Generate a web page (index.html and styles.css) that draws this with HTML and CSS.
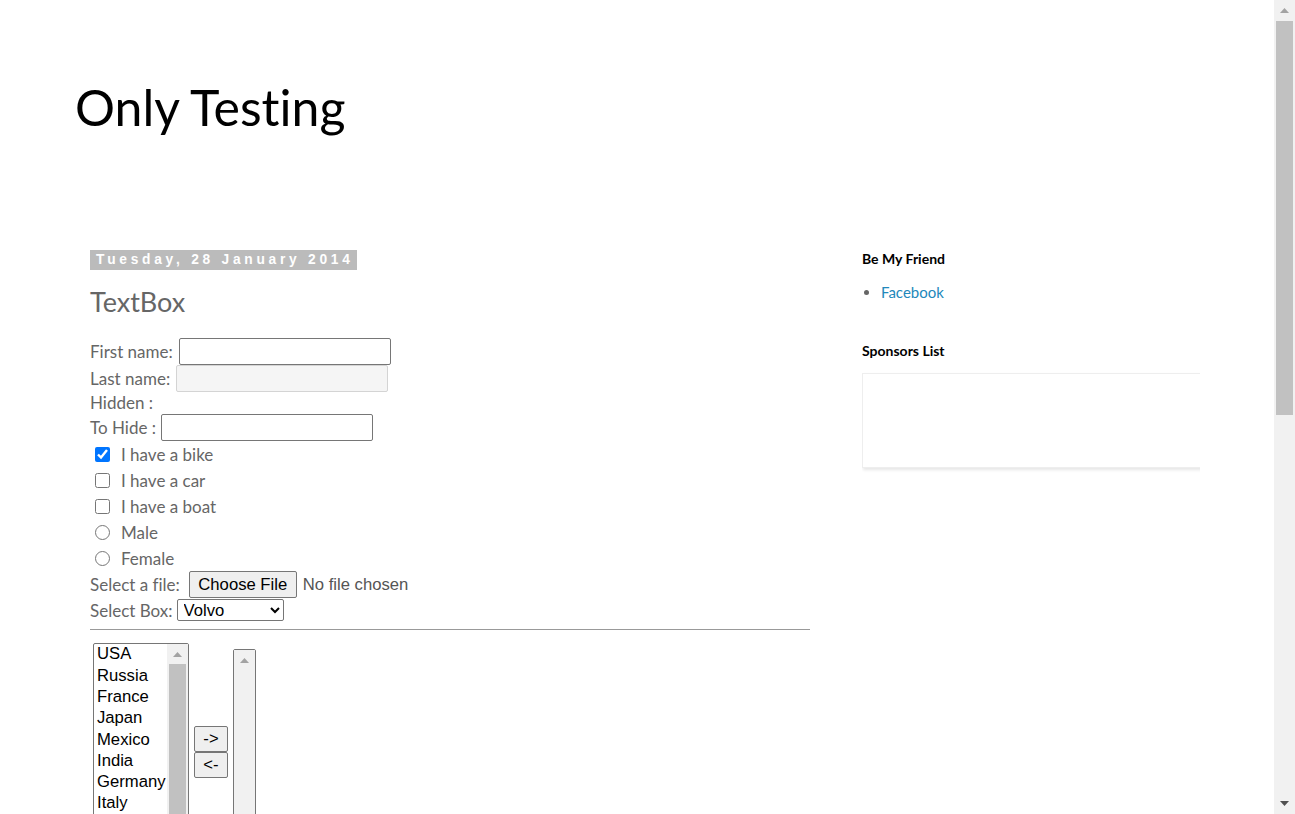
FILE: index.html
```html
<!DOCTYPE html>
<html>
<head>
<meta charset="utf-8">
<title>Only Testing</title>
<link rel="stylesheet" href="styles.css">
</head>
<body>
<div class="page">
  <header class="header">
    <h1 class="site-title">Only Testing</h1>
  </header>
  <div class="columns">
    <main class="main">
      <h2 class="date-header"><span>Tuesday, 28 January 2014</span></h2>
      <h3 class="post-title">TextBox</h3>
      <form class="post-body">
        <div class="row r-first">First name: <input class="text" type="text"></div>
        <div class="row r-last">Last name: <input class="text" type="text" disabled></div>
        <div class="row r-hidden">Hidden : <input type="hidden"></div>
        <div class="row r-hide">To Hide : <input class="text" type="text"></div>
        <div class="row r-check"><input class="cb" type="checkbox" checked> I have a bike</div>
        <div class="row r-check"><input class="cb" type="checkbox"> I have a car</div>
        <div class="row r-check"><input class="cb" type="checkbox"> I have a boat</div>
        <div class="row r-check"><input class="rb" type="radio" name="sex"> Male</div>
        <div class="row r-check"><input class="rb" type="radio" name="sex"> Female</div>
        <div class="row r-file">Select a file: <span class="file-btn">Choose File</span><span class="file-none">No file chosen</span></div>
        <div class="row r-select">Select Box: <select class="sel"><option>Volvo</option><option>Saab</option><option>Opel</option><option>Audi</option></select></div>
        <hr class="rule">
        <div class="lists">
          <div class="listbox">
            <select class="list-from" multiple size="10">
              <option>USA</option>
              <option>Russia</option>
              <option>France</option>
              <option>Japan</option>
              <option>Mexico</option>
              <option>India</option>
              <option>Germany</option>
              <option>Italy</option>
              <option>Spain</option>
              <option>China</option>
              <option>UK</option>
            </select>
            <div class="fake-sb">
              <div class="sb-btn"><svg width="9" height="5" viewBox="0 0 9 5"><path d="M4.5 0L9 5H0z" fill="#a3a3a3"/></svg></div>
              <div class="sb-track"><div class="sb-thumb list-thumb"></div></div>
            </div>
          </div>
          <div class="movers">
            <button type="button" class="mv">-&gt;</button>
            <button type="button" class="mv">&lt;-</button>
          </div>
          <div class="listbox">
            <select class="list-to" multiple size="10"></select>
            <div class="fake-sb">
              <div class="sb-btn"><svg width="9" height="5" viewBox="0 0 9 5"><path d="M4.5 0L9 5H0z" fill="#a3a3a3"/></svg></div>
              <div class="sb-track"></div>
            </div>
          </div>
        </div>
      </form>
    </main>
    <aside class="sidebar">
      <section class="widget">
        <h2 class="widget-title">Be My Friend</h2>
        <ul class="links">
          <li><a href="#">Facebook</a></li>
        </ul>
      </section>
      <section class="widget">
        <h2 class="widget-title">Sponsors List</h2>
        <div class="sponsor-box"></div>
      </section>
    </aside>
  </div>
</div>
<div class="page-sb">
  <div class="sb-btn page-btn"><svg width="9" height="5" viewBox="0 0 9 5"><path d="M4.5 0L9 5H0z" fill="#a3a3a3"/></svg></div>
  <div class="sb-track"><div class="sb-thumb page-thumb"></div></div>
  <div class="sb-btn page-btn"><svg width="9" height="5" viewBox="0 0 9 5"><path d="M0 0H9L4.5 5z" fill="#505050"/></svg></div>
</div>
</body>
</html>
```

FILE: styles.css
```css
html, body {
  margin: 0;
  padding: 0;
  background: #fff;
}
body {
  font-family: "Lato", "Liberation Sans", sans-serif;
  font-variant-ligatures: none;
  color: #666;
  overflow-x: hidden;
}
.page {
  min-height: 1595px;
  width: 1274px;
}
.header {
  padding: 77px 0 0 75px;
  height: 174px;
  box-sizing: border-box;
}
.site-title {
  margin: 0;
  font-weight: normal;
  font-size: 50px;
  line-height: 60px;
  color: #000;
}
.columns {
  display: flex;
  padding-left: 90px;
}
.main {
  width: 720px;
  flex: none;
}
.date-header {
  margin: 76px 0 0;
  height: 20px;
  font: bold 13.75px "Liberation Sans", Arial, sans-serif;
  line-height: 20px;
}
.date-header span {
  display: inline-block;
  background: #bbb;
  color: #fff;
  letter-spacing: 3.75px;
  padding: 0 3px 0 6px;
  height: 20px;
}
.post-title {
  margin: 14px 0 0;
  font-weight: normal;
  font-size: 27px;
  line-height: 36px;
  color: #666;
  height: 38px;
}
.post-body {
  margin: 16px 0 0;
  font-size: 17px;
}
.row {
  display: flex;
  align-items: center;
  white-space: nowrap;
}
.r-first { height: 27px; }
.r-last { height: 26px; }
.r-hidden { height: 23px; }
.r-hide { height: 27px; }
.r-check { height: 26px; }
.r-file { height: 27px; }
.r-select { height: 24px; }
.text {
  box-sizing: border-box;
  width: 212px;
  height: 27px;
  margin: 0 0 0 6px;
  font: 16.67px "Liberation Sans", Arial, sans-serif;
  border: 1px solid #767676;
  border-radius: 2px;
  padding: 1px 2px;
}
.r-hide .text {
  margin-left: 5px;
}
.text:disabled {
  background: #f5f5f5;
  border-color: #d4d4d4;
}
.cb, .rb {
  margin: 0 11px 0 5px;
  width: 15px;
  height: 15px;
  accent-color: #0075ff;
}
.file-btn {
  display: inline-flex;
  align-items: center;
  justify-content: center;
  box-sizing: border-box;
  margin-left: 9px;
  width: 108px;
  height: 27px;
  border: 1px solid #767676;
  border-radius: 2px;
  background: #efefef;
  color: #000;
  font: 16.67px "Liberation Sans", Arial, sans-serif;
}
.file-none {
  margin-left: 6px;
  color: #555;
  font: 16.67px "Liberation Sans", Arial, sans-serif;
}
.sel {
  box-sizing: border-box;
  margin-left: 4px;
  width: 107px;
  height: 22px;
  font: 16.67px "Liberation Sans", Arial, sans-serif;
  color: #000;
  border: 1px solid #767676;
  border-radius: 2px;
  background: #fff;
  padding: 0 2px;
}
.rule {
  margin: 7px 0 0;
  border: 0;
  border-top: 1px solid #999;
  height: 0;
}
.lists {
  display: flex;
  align-items: center;
  margin-top: 13px;
  padding-left: 3px;
}
.listbox {
  position: relative;
  display: flex;
}
.list-from {
  box-sizing: border-box;
  width: 96px;
  height: 218px;
  font: 16.67px "Liberation Sans", Arial, sans-serif;
  color: #000;
  border: 1px solid #767676;
  border-radius: 2px;
  padding: 0;
  overflow: hidden;
}
.list-from option {
  padding: 0.4px 3px 0.9px;
  line-height: 19.3px;
}
.list-to {
  box-sizing: border-box;
  width: 23px;
  height: 206px;
  border: 1px solid #767676;
  border-radius: 2px;
  padding: 0;
  background: #f1f1f1;
  overflow: hidden;
}
.fake-sb {
  position: absolute;
  top: 1px;
  right: 1px;
  bottom: 1px;
  width: 21px;
  background: #f1f1f1;
  display: flex;
  flex-direction: column;
  pointer-events: none;
}
.sb-btn {
  flex: none;
  height: 20px;
  display: flex;
  align-items: center;
  justify-content: center;
}
.sb-track {
  flex: 1;
  display: flex;
  flex-direction: column;
}
.sb-thumb {
  margin: 0 2px;
  background: #c1c1c1;
}
.list-thumb {
  height: 152px;
}
.movers {
  display: flex;
  flex-direction: column;
  margin: 0 5px;
}
.mv {
  box-sizing: border-box;
  width: 34px;
  height: 26px;
  margin: 0;
  padding: 0;
  font: 16.67px "Liberation Sans", Arial, sans-serif;
  color: #000;
  background: #efefef;
  border: 1px solid #767676;
  border-radius: 2px;
}
.sidebar {
  margin-left: 52px;
  width: 338px;
  flex: none;
  overflow: hidden;
  padding-top: 75px;
}
.widget-title {
  margin: 0;
  font-size: 14px;
  font-weight: bold;
  color: #000;
  line-height: 20px;
}
.links {
  margin: 13px 0 0;
  padding-left: 19px;
  color: #666;
  font-size: 15px;
  line-height: 20px;
}
.links a {
  color: #2288bb;
  text-decoration: none;
}
.widget + .widget {
  margin-top: 39px;
}
.sponsor-box {
  margin-top: 12px;
  width: 360px;
  height: 95px;
  box-sizing: border-box;
  border: 1px solid #eee;
  box-shadow: 1px 2px 3px rgba(0,0,0,0.1);
}
.page-sb {
  position: fixed;
  top: 0;
  right: 0;
  width: 21px;
  height: 100vh;
  background: #f1f1f1;
  display: flex;
  flex-direction: column;
}
.page-btn {
  height: 21px;
}
.page-thumb {
  height: 394px;
}
```
